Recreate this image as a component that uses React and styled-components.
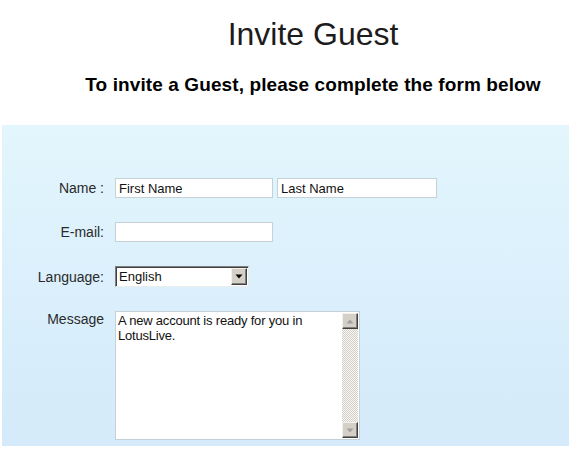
import React from "react";
import styled, { createGlobalStyle } from "styled-components";

const Global = createGlobalStyle`
  html, body { margin: 0; padding: 0; background: #ffffff; }
  body { font-family: "Liberation Sans", Arial, sans-serif; color: #222; }
`;

const Page = styled.div`
  width: 572px;
  height: 451px;
  overflow: hidden;
  background: #fff;
`;

const Header = styled.header`
  padding: 18px 0 0 54px;
  text-align: center;
`;

const Title = styled.h1`
  margin: 0;
  font-size: 32px;
  line-height: 32px;
  font-weight: normal;
  color: #1c1c1c;
`;

const Subtitle = styled.h2`
  margin: 25px 0 0;
  font-size: 19px;
  line-height: 19px;
  font-weight: bold;
  letter-spacing: 0.1px;
  color: #000;
`;

const Panel = styled.section`
  margin: 31px 3px 0 2px;
  padding: 53px 0 6px;
  background: linear-gradient(to bottom, #e3f6fd 0%, #dcf1fc 40%, #d5eafa 100%);
`;

const Form = styled.form`
  display: grid;
  grid-template-columns: 102px auto;
  column-gap: 11px;
  row-gap: 24px;
  align-items: center;
`;

const Label = styled.label`
  font-size: 14px;
  line-height: 16px;
  color: #2a2a2a;
  text-align: right;
  white-space: pre;
  align-self: ${(p) => (p.$top ? "start" : "center")};
`;

const Fields = styled.div`
  display: flex;
  gap: 4px;
`;

const TextInput = styled.input`
  box-sizing: border-box;
  width: ${(p) => p.$w}px;
  height: 20px;
  margin: 0;
  padding: 0 3px;
  border: 1px solid #c6d0d7;
  background: #fff;
  font-family: "Liberation Sans", Arial, sans-serif;
  font-size: 13px;
  color: #111;
  outline: none;
  &::placeholder { color: #111; opacity: 1; }
`;

const SelectBox = styled.div`
  box-sizing: border-box;
  display: flex;
  width: 134px;
  height: 21px;
  border-top: 1px solid #7f7f7f;
  border-left: 1px solid #7f7f7f;
  border-right: 1px solid #ececec;
  border-bottom: 1px solid #ececec;
  box-shadow: inset 1px 1px 0 #404040;
  background: #fff;
  padding: 1px;
`;

const NativeSelect = styled.select`
  flex: 1;
  min-width: 0;
  appearance: none;
  border: none;
  margin: 0;
  padding: 0 0 0 2px;
  background: transparent;
  font-family: "Liberation Sans", Arial, sans-serif;
  font-size: 13px;
  color: #111;
  outline: none;
`;

const WinButton = styled.span`
  box-sizing: border-box;
  display: flex;
  align-items: center;
  justify-content: center;
  width: 16px;
  height: ${(p) => p.$h || 16}px;
  flex: none;
  background: #d4d0c8;
  border-top: 1px solid #f2f1ee;
  border-left: 1px solid #f2f1ee;
  border-right: 1px solid #404040;
  border-bottom: 1px solid #404040;
  box-shadow: inset -1px -1px 0 #808080;
`;

const AreaBox = styled.div`
  box-sizing: border-box;
  display: flex;
  width: 245px;
  height: 129px;
  border: 1px solid #c6d0d7;
  background: #fff;
`;

const TextArea = styled.textarea`
  flex: 1;
  resize: none;
  border: none;
  margin: 0;
  padding: 1px 2px;
  overflow: hidden;
  font-family: "Liberation Sans", Arial, sans-serif;
  font-size: 13px;
  line-height: 15px;
  letter-spacing: -0.2px;
  color: #111;
  outline: none;
  background: transparent;
`;

const ScrollBar = styled.div`
  display: flex;
  flex-direction: column;
  width: 16px;
  margin: 1px 1px 1px 0;
`;

const Track = styled.div`
  flex: 1;
  background-color: #f4f3f0;
  background-image: repeating-conic-gradient(#d4d0c8 0 25%, #f7f6f3 0 50%);
  background-size: 2px 2px;
`;

const Arrow = ({ dir = "down", color = "#000" }) => (
  <svg width="8" height="5" viewBox="0 0 8 5">
    {dir === "down" ? (
      <polygon points="0.5,0.5 7.5,0.5 4,4.5" fill={color} />
    ) : (
      <polygon points="0.5,4.5 7.5,4.5 4,0.5" fill={color} />
    )}
  </svg>
);

export default function App() {
  return (
    <Page>
      <Global />
      <Header>
        <Title>Invite Guest</Title>
        <Subtitle>To invite a Guest, please complete the form below</Subtitle>
      </Header>
      <Panel>
        <Form onSubmit={(e) => e.preventDefault()}>
          <Label>Name :</Label>
          <Fields>
            <TextInput $w={158} placeholder="First Name" />
            <TextInput $w={160} placeholder="Last Name" />
          </Fields>

          <Label>E-mail:</Label>
          <Fields>
            <TextInput $w={158} />
          </Fields>

          <Label>Language:</Label>
          <Fields>
            <SelectBox>
              <NativeSelect defaultValue="en">
                <option value="en">English</option>
              </NativeSelect>
              <WinButton $h={17}>
                <Arrow dir="down" />
              </WinButton>
            </SelectBox>
          </Fields>

          <Label $top>Message</Label>
          <Fields>
            <AreaBox>
              <TextArea defaultValue={"A new account is ready for you in LotusLive."} />
              <ScrollBar>
                <WinButton>
                  <Arrow dir="up" color="#a0a0a0" />
                </WinButton>
                <Track />
                <WinButton>
                  <Arrow dir="down" color="#a0a0a0" />
                </WinButton>
              </ScrollBar>
            </AreaBox>
          </Fields>
        </Form>
      </Panel>
    </Page>
  );
}
